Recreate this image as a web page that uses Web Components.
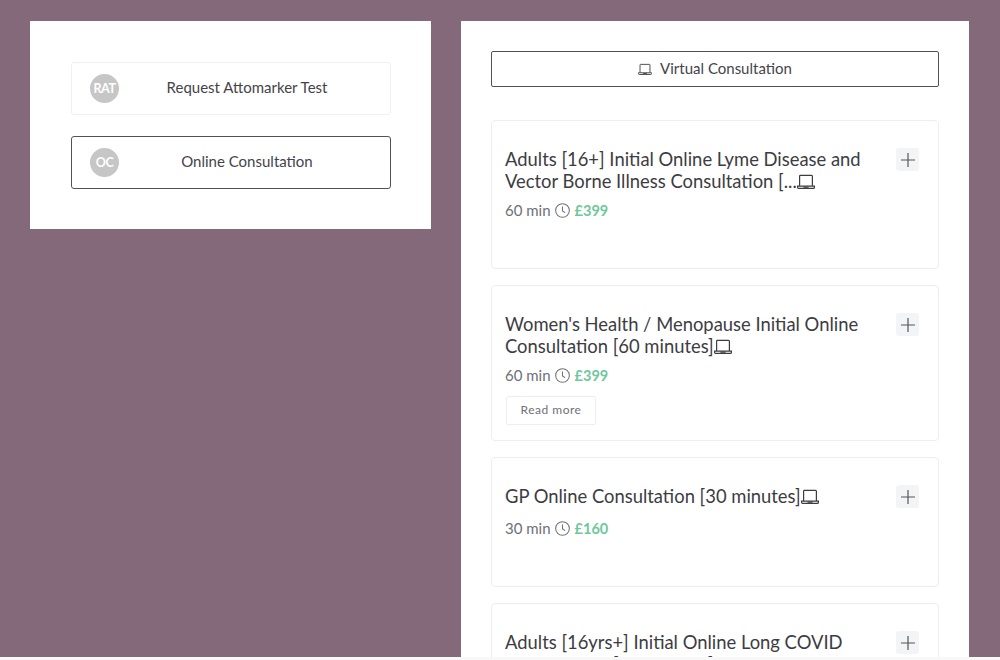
<!DOCTYPE html>
<html>
<head>
<meta charset="utf-8">
<style>
  html, body { margin: 0; height: 100%; }
  body { overflow: hidden; background: #f8f8f8; font-family: "Lato", "Liberation Sans", sans-serif; }
</style>
</head>
<body>
<booking-page>
  <side-panel slot="side">
    <category-row initials="RAT">Request Attomarker Test</category-row>
    <category-row initials="OC" selected>Online Consultation</category-row>
  </side-panel>
  <service-panel slot="main">
    <filter-button>Virtual Consultation</filter-button>
    <service-card height="149" mins="60" price="£399">Adults [16+] Initial Online Lyme Disease and Vector Borne Illness Consultation [...</service-card>
    <service-card height="156" mins="60" price="£399" more>Women's Health / Menopause Initial Online Consultation [60 minutes]</service-card>
    <service-card height="130" mins="30" price="£160">GP Online Consultation [30 minutes]</service-card>
    <service-card height="149" mins="60" price="£399">Adults [16yrs+] Initial Online Long COVID Consultation [60 minutes]</service-card>
  </service-panel>
</booking-page>

<script>
// laptop glyph, used on the filter button and after each card title
const laptopIcon = `<svg viewBox="0 0 18 16" fill="none" stroke="currentColor" stroke-width="1.2">
    <path d="M2.6 12V2.2a.8.8 0 0 1 .8-.8h11.2a.8.8 0 0 1 .8.8V12"/>
    <path d="M.6 12.2h16.8v1.2a1 1 0 0 1-1 1H1.6a1 1 0 0 1-1-1z"/>
    <path d="M7 12.4v.8h4v-.8"/>
  </svg>`;

const clockIcon = `<svg viewBox="0 0 16 16" fill="none" stroke="currentColor" stroke-width="1.1">
    <circle cx="8" cy="8" r="7.3"/>
    <path d="M8 3.8V8.4l2.8 1.9"/>
  </svg>`;

customElements.define('booking-page', class extends HTMLElement {
  constructor() {
    super();
    this.attachShadow({ mode: 'open' }).innerHTML = `
      <style>
        :host {
          display: block;
          height: 657px;
          overflow: hidden;
          background: #84697a;
        }
        #layout {
          display: flex;
          align-items: flex-start;
          gap: 30px;
          padding: 21px 31px 0 30px;
        }
      </style>
      <div id="layout">
        <slot name="side"></slot>
        <slot name="main"></slot>
      </div>
    `;
  }
});

customElements.define('side-panel', class extends HTMLElement {
  constructor() {
    super();
    this.attachShadow({ mode: 'open' }).innerHTML = `
      <style>
        :host {
          display: flex;
          flex-direction: column;
          gap: 21px;
          box-sizing: border-box;
          width: 401px;
          height: 208px;
          flex: none;
          padding: 41px 40px 0 41px;
          background: #fff;
        }
      </style>
      <slot></slot>
    `;
  }
});

customElements.define('category-row', class extends HTMLElement {
  constructor() {
    super();
    const selected = this.hasAttribute('selected');
    this.attachShadow({ mode: 'open' }).innerHTML = `
      <style>
        :host {
          display: flex;
          align-items: center;
          box-sizing: border-box;
          height: 53px;
          padding: 0 19px 0 18px;
          border: 1px solid ${selected ? '#555057' : '#f0f0f2'};
          border-radius: 3px;
          color: #45434a;
          font-size: 15px;
        }
        #badge {
          display: flex;
          align-items: center;
          justify-content: center;
          width: 29px;
          height: 29px;
          flex: none;
          border-radius: 50%;
          background: #c6c6c6;
          color: #fff;
          font-size: 12.5px;
          font-weight: 700;
          letter-spacing: -0.5px;
        }
        #label {
          flex: 1;
          text-align: center;
          padding-left: 4px;
          margin-bottom: 4px;
        }
      </style>
      <span id="badge">${this.getAttribute('initials')}</span>
      <span id="label"><slot></slot></span>
    `;
  }
});

customElements.define('service-panel', class extends HTMLElement {
  constructor() {
    super();
    this.attachShadow({ mode: 'open' }).innerHTML = `
      <style>
        :host {
          display: flex;
          flex-direction: column;
          gap: 16px;
          box-sizing: border-box;
          width: 508px;
          height: 700px;
          flex: none;
          padding: 30px 30px 0;
          background: #fff;
        }
      </style>
      <slot></slot>
    `;
  }
});

customElements.define('filter-button', class extends HTMLElement {
  constructor() {
    super();
    this.attachShadow({ mode: 'open' }).innerHTML = `
      <style>
        :host {
          display: flex;
          align-items: center;
          justify-content: center;
          flex: none;
          gap: 8px;
          box-sizing: border-box;
          height: 36px;
          margin-bottom: 17px;
          padding-bottom: 3px;
          border: 1px solid #555057;
          border-radius: 2px;
          color: #45434a;
          font-size: 15px;
        }
        svg { width: 14px; height: 13px; margin-top: 4px; }
      </style>
      ${laptopIcon}
      <span><slot></slot></span>
    `;
  }
});

customElements.define('service-card', class extends HTMLElement {
  constructor() {
    super();
    const more = this.hasAttribute('more')
      ? '<div id="more">Read more</div>'
      : '';
    this.attachShadow({ mode: 'open' }).innerHTML = `
      <style>
        :host {
          display: flex;
          gap: 16px;
          align-items: flex-start;
          box-sizing: border-box;
          flex: none;
          height: ${this.getAttribute('height')}px;
          padding: 27px 19px 0 13px;
          border: 1px solid #eeeef0;
          border-radius: 4px;
          color: #3d3c42;
        }
        #body { flex: 1; min-width: 0; }
        #title {
          min-height: 25px;
          font-size: 18.4px;
          line-height: 22px;
        }
        #title svg {
          width: 18px;
          height: 16px;
          vertical-align: -2px;
        }
        #meta {
          display: flex;
          align-items: center;
          gap: 4px;
          margin-top: 8px;
          height: 20px;
          color: #6f6f78;
          font-size: 15px;
        }
        #meta svg { width: 15px; height: 15px; }
        #price { margin-left: 1px; color: #6fc79c; font-weight: 700; font-size: 14.5px; }
        #more {
          box-sizing: border-box;
          width: 90px;
          height: 29px;
          margin: 11px 0 0 1px;
          border: 1px solid #eeeef0;
          border-radius: 2px;
          color: #6f6f78;
          font-size: 12px;
          letter-spacing: 0.5px;
          line-height: 26px;
          text-align: center;
        }
        #add {
          display: flex;
          align-items: center;
          justify-content: center;
          width: 23px;
          height: 23px;
          flex: none;
          border-radius: 3px;
          background: #f3f4f5;
          color: #55555c;
        }
        #add svg { width: 14px; height: 14px; }
      </style>
      <div id="body">
        <div id="title"><slot></slot>${laptopIcon}</div>
        <div id="meta"><span>${this.getAttribute('mins')} min</span>${clockIcon}<span id="price">${this.getAttribute('price')}</span></div>
        ${more}
      </div>
      <div id="add">
        <svg viewBox="0 0 14 14" stroke="currentColor" stroke-width="1.2"><path d="M7 0v14M0 7h14"/></svg>
      </div>
    `;
  }
});
</script>
</body>
</html>
